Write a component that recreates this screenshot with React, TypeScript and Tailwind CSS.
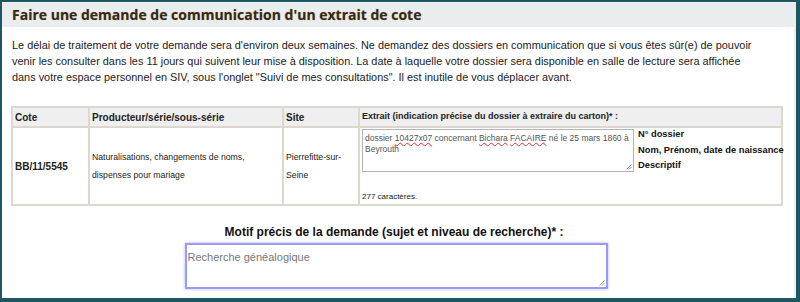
import React from "react";

const font = { fontFamily: '"Liberation Sans", Arial, sans-serif' };

function Wavy({ children }: { children: React.ReactNode }) {
  return (
    <span className="underline decoration-wavy decoration-[#e03030] decoration-1 underline-offset-[1px]">
      {children}
    </span>
  );
}

function Grip() {
  return (
    <svg className="absolute right-[1px] bottom-[1px]" width="7" height="7" viewBox="0 0 7 7">
      <path d="M6.5 1.5 L1.5 6.5 M6.5 4 L4 6.5" stroke="#999" strokeWidth="1" />
    </svg>
  );
}

export default function App() {
  return (
    <div className="w-[800px] h-[302px] bg-[#1d5763] pt-[2px] pl-[2px] pr-[4px] pb-[4px] overflow-hidden" style={font}>
      <div className="w-full h-full bg-white border-r-2 border-[#e9eeee] flex flex-col">
        <div className="h-[25px] bg-[#e9eded] border-t border-[#f4f6f6] flex items-start pl-[10px] pt-[4px]">
          <h1
            className="text-[14px] font-bold text-[#3a2810] leading-[16px] [text-shadow:0_0_1px_rgba(90,60,20,0.35)]"
            style={{ fontFamily: '"Open Sans", sans-serif' }}
          >
            Faire une demande de communication d'un extrait de cote
          </h1>
        </div>
        <p className="mt-[10px] px-[10px] text-[10.9px] leading-[16px] text-[#222] whitespace-nowrap">
          Le délai de traitement de votre demande sera d'environ deux semaines. Ne demandez des dossiers en communication que si vous êtes sûr(e) de pouvoir
          <br />
          venir les consulter dans les 11 jours qui suivent leur mise à disposition. La date à laquelle votre dossier sera disponible en salle de lecture sera affichée
          <br />
          dans votre espace personnel en SIV, sous l'onglet "Suivi de mes consultations". Il est inutile de vous déplacer avant.
        </p>
        <div className="mt-[21px] ml-[9px] w-[772px]">
          <table className="w-full table-fixed border-collapse border-2 border-[#dcd8d0] text-[10px] text-[#222]">
            <colgroup>
              <col className="w-[77px]" />
              <col className="w-[194px]" />
              <col className="w-[76px]" />
              <col />
            </colgroup>
            <thead>
              <tr className="bg-[#efefef] h-[20px]">
                <th className="border-2 border-[#dcd8d0] text-left font-bold px-[2px] text-[10px]">Cote</th>
                <th className="border-2 border-[#dcd8d0] text-left font-bold px-[2px] text-[10px]">Producteur/série/sous-série</th>
                <th className="border-2 border-[#dcd8d0] text-left font-bold px-[2px] text-[10px]">Site</th>
                <th className="border-2 border-[#dcd8d0] text-left font-bold px-[2px] text-[9px] whitespace-nowrap">
                  Extrait (indication précise du dossier à extraire du carton)* :
                </th>
              </tr>
            </thead>
            <tbody>
              <tr className="h-[78px]">
                <td className="border-2 border-[#dcd8d0] px-[2px] font-bold text-[10px]">BB/11/5545</td>
                <td className="border-2 border-[#dcd8d0] px-[2px] leading-[18px] text-[8.7px]">
                  Naturalisations, changements de noms,
                  <br />
                  dispenses pour mariage
                </td>
                <td className="border-2 border-[#dcd8d0] px-[2px] leading-[18px] text-[8.7px]">
                  Pierrefitte-sur-
                  <br />
                  Seine
                </td>
                <td className="border-2 border-[#dcd8d0] px-[2px] align-top pt-[1px]">
                  <div className="flex">
                    <div className="relative shrink-0 w-[272px] h-[43px] border border-[#b4b4b4] bg-white px-[2px] pt-[3px] text-[8.5px] leading-[11px] text-[#555] whitespace-nowrap overflow-hidden">
                      dossier <Wavy>10427x07</Wavy> concernant <Wavy>Bichara</Wavy> <Wavy>FACAIRE</Wavy> né le 25 mars 1860 à
                      <br />
                      Beyrouth
                      <Grip />
                    </div>
                    <div className="ml-[4px] text-[9.3px] font-bold leading-[15.5px] mt-[-2px] text-[#111] whitespace-nowrap">
                      <div>N° dossier</div>
                      <div>Nom, Prénom, date de naissance</div>
                      <div>Descriptif</div>
                    </div>
                  </div>
                  <div className="mt-[17px] text-[8px] text-[#222]">277 caractères.</div>
                </td>
              </tr>
            </tbody>
          </table>
        </div>
        <div className="mt-[19px] flex flex-col items-center">
          <div className="text-[12px] leading-[14px] font-bold text-[#111] ml-[-8px]">
            Motif précis de la demande (sujet et niveau de recherche)* :
          </div>
          <div className="mt-[4px] ml-[-4px] relative w-[423px] h-[46px] border-2 border-[#9a9cf4] shadow-[0_0_3px_#b8b8ff] bg-white px-[1px] pt-[4px] text-[11px] text-[#777]">
            Recherche généalogique
            <Grip />
          </div>
        </div>
      </div>
    </div>
  );
}
